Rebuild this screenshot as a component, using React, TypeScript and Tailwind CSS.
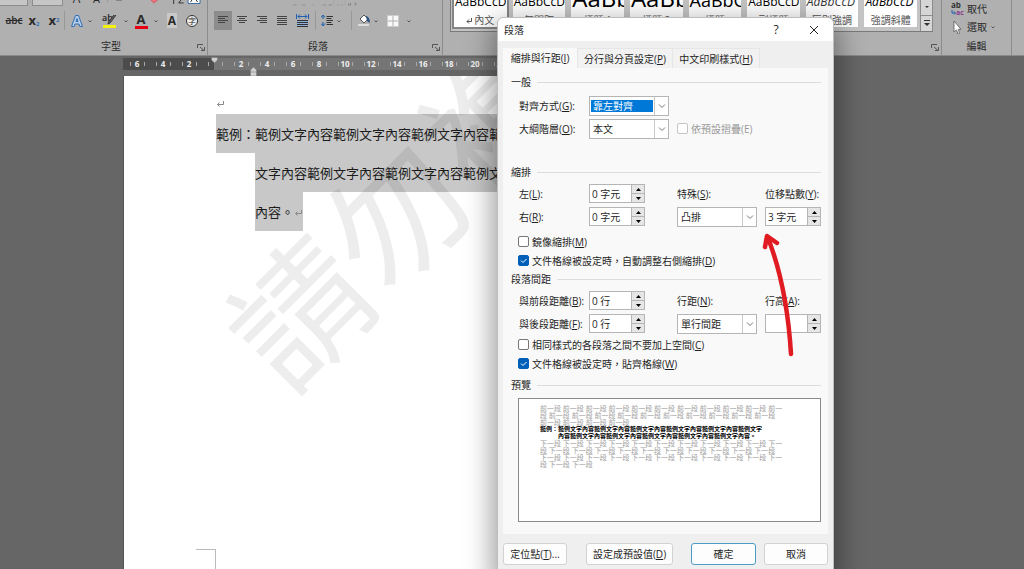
import React from 'react'

const SAMPLE = '範例文字內容'

interface StyleTile {
    name: string
    sample: string
    className: string
}

const styleTiles: StyleTile[] = [
    { name: '內文', sample: 'AaBbCcD', className: 'text-[12px] leading-[14px]' },
    { name: '無間距', sample: 'AaBbCcD', className: 'text-[12px] leading-[14px]' },
    { name: '標題 1', sample: 'AaBb', className: 'text-[24px] leading-[22px]' },
    { name: '標題 2', sample: 'AaBb', className: 'text-[24px] leading-[22px]' },
    { name: '標題', sample: 'AaBbC', className: 'text-[18px] leading-[18px]' },
    { name: '副標題', sample: 'AaBbCcD', className: 'text-[12px] leading-[14px]' },
    { name: '區別強調', sample: 'AaBbCcD', className: 'text-[12px] leading-[14px] italic opacity-80' },
    { name: '強調斜體', sample: 'AaBbCcD', className: 'text-[12px] leading-[14px] italic' },
]

const rulerMarks = [6, 4, 2, 0, 2, 4, 6, 8, 10, 12, 14, 16, 18, 20, 22, 24, 26, 28, 30, 32, 34, 36, 38, 40]

function Chevron({ className = '' }: { className?: string }) {
    return (
        <svg aria-hidden viewBox="0 0 8 8" className={`size-2 shrink-0 ${className}`} fill="none" stroke="#555">
            <path d="M2.500 3.500L4 5l1.500-1.500" />
        </svg>
    )
}

function Separator({ className = '' }: { className?: string }) {
    return <span className={`h-[19px] w-px shrink-0 bg-[#989898] ${className}`} />
}

function Lines({ widths }: { widths: [number, number][] }) {
    return (
        <svg aria-hidden viewBox="0 0 12 12" className="size-3" stroke="#444" strokeWidth="1">
            {widths.map(([from, to], i) => (
                <path key={i} d={`M${from} ${1.5 + i * 2}H${to}`} />
            ))}
        </svg>
    )
}

function Tool({ label, className, children }: { label: string; className: string; children: React.ReactNode }) {
    return (
        <button
            type="button"
            aria-label={label}
            className={`flex h-[19px] shrink-0 items-center justify-center ${className}`}
        >
            {children}
        </button>
    )
}

function Launcher() {
    return (
        <button type="button" aria-label="更多選項" className="absolute right-[2px] bottom-1 size-2">
            <svg aria-hidden viewBox="0 0 8 8" fill="none" stroke="#555">
                <path d="M.5 5V1.500H6M3 4l4 3.500M7.500 4v3.500H4" />
            </svg>
        </button>
    )
}

function FontGroup() {
    return (
        <section className="relative flex w-[208px] shrink-0 flex-col justify-end border-r border-[#8c8c8c]">
            <div className="flex h-5 items-end">
                <span className="h-5 w-7 border-r border-b border-[#8c8c8c] bg-[#c6c6c6]" />
                <span className="ml-1 h-5 w-[31px] border border-[#8c8c8c] bg-[#c6c6c6] pl-1 text-[10px] leading-[14px]">12</span>
                <span className="ml-1 w-5 text-center text-[12px] leading-[14px]">A</span>
                <span className="w-5 text-center text-[11px] leading-[14px]">A</span>
                <Separator className="mb-1" />
                <svg aria-hidden viewBox="0 0 96 20" className="ml-1 h-5 w-[96px]" fill="none">
                    <path d="M4 14h6" stroke="#555" />
                    <path d="M38 13l4 4 5-4" fill="#ef7780" stroke="#d55660" />
                    <path d="M62 11v7M67 12h4l-4 5h5" stroke="#333" />
                    <path d="M76.500 4.500h12v13h-12z" fill="#fff" stroke="#3b6ba5" />
                    <path d="M79 16l3.500-5 3.500 5" stroke="#333" />
                </svg>
            </div>
            <div className="mt-[5px] flex h-[19px] items-center pl-1">
                <Tool label="刪除線" className="w-5 text-[10px] font-semibold line-through">abc</Tool>
                <Tool label="下標" className="w-5 text-[13px] font-bold">
                    <span>x<sub className="text-[6px] text-[#2f6fb5]">2</sub></span>
                </Tool>
                <Tool label="上標" className="w-5 text-[13px] font-bold">
                    <span>x<sup className="text-[6px] text-[#2f6fb5]">2</sup></span>
                </Tool>
                <Separator className="mr-[3px]" />
                <Tool label="文字效果" className="w-[18px]">
                    <svg aria-hidden viewBox="0 0 14 14" className="size-[14px]" strokeLinejoin="round">
                        <path d="M1.500 12.500L5.500 1.500h3l4 11H9.800L9 10H5l-.8 2.500zM6 7.500h2L7 4.500z" fill="#b9cde6" stroke="#2f6fb5" />
                    </svg>
                </Tool>
                <Chevron />
                <Tool label="文字醒目提示色彩" className="ml-1 w-6">
                    <svg aria-hidden viewBox="0 0 16 16" className="size-4">
                        <text x="0" y="8" fontSize="9" fontWeight="600" fill="#222">ab</text>
                        <path d="M14 2L8 10l-2 1 .5-2L12 2" fill="#666" stroke="#333" />
                        <path d="M1 12h13v3H1z" fill="#f6f010" />
                    </svg>
                </Tool>
                <Chevron />
                <Tool label="字型色彩" className="w-[22px]">
                    <span className="w-[13px] border-b-[3px] border-[#e60012] text-center text-[13px] leading-[13px] font-bold">A</span>
                </Tool>
                <Chevron />
                <Tool label="字元網底" className="ml-[2px] w-5">
                    <span className="bg-[#c9c9c9] px-px text-[12px] leading-[15px] font-bold">A</span>
                </Tool>
                <Tool label="圍繞字元" className="w-5">
                    <span className="flex size-3 items-center justify-center rounded-full border border-[#333] bg-[#eee] text-[8px] leading-none">字</span>
                </Tool>
            </div>
            <h2 className="mt-[9px] mb-[2px] pr-[86px] text-right text-[10px] leading-[14px]">字型</h2>
            <Launcher />
        </section>
    )
}

function ParagraphGroup() {
    return (
        <section className="relative flex w-[235px] shrink-0 flex-col justify-end border-r border-[#8c8c8c]">
            <svg aria-hidden viewBox="0 0 234 20" className="h-5 w-[234px]" fill="none" stroke="#444">
                <path d="M9 16.500h2M13 16.500h9M40 16.500h3M44 16.500h8M75 16.500h3" />
                <path d="M109 16.500h12M129 16.500h12" />
                <path d="M146.500 0v18M183.500 0v18" stroke="#989898" />
                <path d="M158 18l3-4M170 14l3 4M194 13h4l-4 4h5M202 10v7l-2-2m2 2l2-2" />
                <path d="M217 9v9M220 9v9" />
            </svg>
            <div className="mt-[5px] flex h-[19px] items-center pl-[6px]">
                <Tool label="靠左對齊" className="w-[18px] bg-[#8c8c8c]">
                    <Lines widths={[[1, 11], [1, 8], [1, 11], [1, 8]]} />
                </Tool>
                <Tool label="置中" className="w-5">
                    <Lines widths={[[1, 11], [3, 9], [1, 11], [3, 9]]} />
                </Tool>
                <Tool label="靠右對齊" className="w-5">
                    <Lines widths={[[1, 11], [4, 11], [1, 11], [4, 11]]} />
                </Tool>
                <Tool label="左右對齊" className="w-5">
                    <Lines widths={[[1, 11], [1, 11], [1, 11], [1, 11], [1, 11]]} />
                </Tool>
                <Tool label="分散對齊" className="w-5">
                    <svg aria-hidden viewBox="0 0 13 13" className="size-[13px]" fill="none" stroke="#333">
                        <path d="M1 6h11v6H1z" fill="#8fb0d8" stroke="none" />
                        <path d="M1 6.500h11M1 8.500h11M1 10.500h11M1 12.500h11" />
                        <path d="M.5 0v5M12.500 0v5M2 2.500h9M4 .5l-2 2 2 2M9 .5l2 2-2 2" stroke="#1f5fae" />
                    </svg>
                </Tool>
                <Separator className="mx-[3px]" />
                <Tool label="行距與段落間距" className="w-4">
                    <svg aria-hidden viewBox="0 0 12 13" className="h-[13px] w-3" fill="none" stroke="#333">
                        <path d="M5.500 2.500h6.500M5.500 4.500h5M5.500 6.500h6.500M5.500 8.500h5M5.500 10.500h6.500" />
                        <path d="M2 1.500v3.500M2 8v3.500M0 3.500l2-2.500 2 2.500M0 9.500l2 2.500 2-2.500" stroke="#1f5fae" />
                    </svg>
                </Tool>
                <Chevron />
                <Separator className="mr-1 ml-2" />
                <Tool label="網底" className="w-4">
                    <svg aria-hidden viewBox="0 0 13 13" className="size-[13px]">
                        <path d="M0 10h11v2H0z" fill="#ddd" />
                        <path d="M2 5l4-4 4 4-4 4z" fill="#fff" stroke="#555" />
                        <path d="M8 2q4 1 4 7L9 7z" fill="#2b4f80" />
                    </svg>
                </Tool>
                <Chevron />
                <Tool label="框線" className="ml-1 w-[18px]">
                    <svg aria-hidden viewBox="0 0 12 12" className="size-3" stroke="#b0b0b0">
                        <path d="M.5.5h11v11H.5z" fill="#f8f8f8" stroke="#ccc" />
                        <path d="M6 1v10M1 6h10" />
                    </svg>
                </Tool>
                <Chevron className="ml-[3px]" />
            </div>
            <h2 className="mt-[9px] mb-[2px] pr-[14px] text-center text-[10px] leading-[14px]">段落</h2>
            <Launcher />
        </section>
    )
}

function StylesGroup() {
    return (
        <section className="relative w-[499px] shrink-0 border-r border-[#8c8c8c] pl-[7px]">
            <div className="flex h-8 w-[483px] items-end border-b border-l border-[#7a7a7a] bg-[#c4c4c4]">
                <ul className="flex h-8 min-w-0 flex-1 gap-[6px] px-[3px]">
                    {styleTiles.map((tile, i) => (
                        <li
                            key={tile.name}
                            className={`mb-1 flex min-w-0 flex-1 flex-col justify-end overflow-hidden bg-white pb-px ${i === 0 ? 'outline-2 outline-[#858585]' : ''}`}
                        >
                            <span className={`pl-px font-["Open_Sans"] whitespace-nowrap text-black ${tile.className}`}>{tile.sample}</span>
                            <span className="mt-[5px] text-center text-[10px] leading-[12px] whitespace-nowrap text-[#555]">
                                {i === 0 && (
                                    <svg aria-hidden viewBox="0 0 6 6" className="mr-[2px] inline size-[6px]" fill="none" stroke="#555">
                                        <path d="M5.500 0v3.500H1M3 1.500l-2 2 2 2" />
                                    </svg>
                                )}
                                {tile.name}
                            </span>
                        </li>
                    ))}
                </ul>
                <div className="flex h-8 w-[13px] shrink-0 flex-col border-x border-[#8c8c8c]">
                    <button type="button" aria-label="向下捲動" className="flex flex-1 items-center justify-center border-b border-[#8c8c8c] bg-[#d6d6d6]">
                        <svg aria-hidden viewBox="0 0 6 4" className="h-1 w-[6px]"><path d="M1 1h4L3 3z" fill="#333" /></svg>
                    </button>
                    <button type="button" aria-label="更多樣式" className="flex flex-1 items-center justify-center bg-[#d6d6d6]">
                        <svg aria-hidden viewBox="0 0 8 7" className="h-[7px] w-2"><path d="M1 0h6v1H1zM1 3h6L4 6z" fill="#333" /></svg>
                    </button>
                </div>
            </div>
            <Launcher />
        </section>
    )
}

function EditingGroup() {
    return (
        <section className="flex w-[70px] shrink-0 flex-col justify-end border-r border-[#8c8c8c] text-[10px]">
            <button type="button" className="flex h-[19px] items-center pl-2">
                <svg aria-hidden viewBox="0 0 16 14" className="mr-px h-[14px] w-4 shrink-0">
                    <text x="1" y="6" fontSize="8" fontWeight="700" fill="#333">ab</text>
                    <text x="6" y="13" fontSize="7" fontWeight="700" fill="#8a3d8f">ac</text>
                    <path d="M2 8v3h3M4 9.500l1.500 1.500L4 12.500" fill="none" stroke="#1f5fae" />
                </svg>
                取代
            </button>
            <button type="button" className="flex h-[19px] items-center pl-2">
                <svg aria-hidden viewBox="0 0 16 14" className="mr-px h-[14px] w-4 shrink-0">
                    <path d="M4 1v11l2.500-2 1.500 4 1.500-.7L8.300 9.300H11z" fill="#fff" stroke="#555" strokeWidth=".8" />
                </svg>
                選取
                <Chevron className="ml-[2px]" />
            </button>
            <h2 className="mt-[3px] mb-[2px] text-center leading-[14px]">編輯</h2>
        </section>
    )
}

function Ruler() {
    return (
        <div className="ml-[123px] flex h-3 max-w-[641px] overflow-hidden bg-[linear-gradient(to_right,#4c4c4c_91px,#757575_91px)] pl-px">
            {rulerMarks.map((mark, i) => (
                <span key={i} className="flex w-[26px] shrink-0 items-center justify-center gap-px text-[8px] leading-3 font-bold text-[#eee]">
                    <i className="h-1 w-px bg-[#a8a8a8]" />
                    <span className="w-[11px] text-center">{mark || ''}</span>
                    <i className="h-1 w-px bg-[#a8a8a8]" />
                </span>
            ))}
        </div>
    )
}

function IndentMarkers() {
    return (
        <div className="absolute top-0 left-[210px]">
            <svg aria-hidden viewBox="0 0 50 22" className="h-[22px] w-[50px]" fill="#d0d0d0" stroke="#777" strokeWidth=".5">
                <path d="M1.500 1.500h6V4l-3 3-3-3z" />
                <path d="M43.500 11l3 3v6h-6v-6zM40.500 16h6" />
            </svg>
        </div>
    )
}

function ReturnMark() {
    return (
        <svg aria-hidden viewBox="0 0 9 8" className="inline h-2 w-[9px]" fill="none" stroke="#888">
            <path d="M7.500 1v3.500H1.500M3.500 2.500l-2 2 2 2" />
        </svg>
    )
}

function DocumentPage() {
    return (
        <main className='relative ml-[123px] flex min-h-0 max-w-[641px] flex-1 flex-col overflow-hidden border-l border-[#555] bg-white pl-[92px] font-["Noto_Sans_CJK_TC",sans-serif] text-[13px] text-[#1c1c1c]'>
            <p className="mt-4 h-[22px] leading-[22px]"><ReturnMark /></p>
            <p className="w-[457px] pl-[39px] -indent-[39px] leading-[39px] break-all">
                <span className="bg-[#c8c8c8] py-[10px]">
                    範例：{SAMPLE.repeat(11)}。<ReturnMark />
                </span>
            </p>
            <div aria-hidden className="absolute top-[19px] left-[43px] w-[544px] -rotate-45 text-[136px] leading-[136px] whitespace-nowrap text-black/7">
                請勿複製
            </div>
            <div className="mt-auto -ml-5 h-5 w-5 border-t border-r border-[#bbb]" />
        </main>
    )
}

function Mnemonic({ text, hotkey, suffix = '' }: { text: string; hotkey: string; suffix?: string }) {
    return (
        <>
            {text}(<span className="underline">{hotkey}</span>){suffix}
        </>
    )
}

function FieldLabel({ id, text, hotkey }: { id: string; text: string; hotkey: string }) {
    return (
        <label htmlFor={id} className="whitespace-nowrap">
            <Mnemonic text={text} hotkey={hotkey} suffix=":" />
        </label>
    )
}

function Dropdown({ id, value, active = false }: { id: string; value: string; active?: boolean }) {
    return (
        <div className="flex h-5 w-20 items-stretch border border-[#b5b5b5] bg-white">
            <select
                id={id}
                defaultValue={value}
                className={`min-w-0 flex-1 appearance-none leading-[12px] outline-none ${active ? 'my-[3px] mr-px ml-px bg-[#0078d7] pl-[2px] text-white' : 'bg-white pl-[3px]'}`}
            >
                <option>{value}</option>
            </select>
            <span className="flex w-[14px] items-center justify-center border-l border-[#c8c8c8]">
                <svg aria-hidden viewBox="0 0 8 8" className="size-2" fill="none" stroke="#777">
                    <path d="M1 2.500l3 3 3-3" />
                </svg>
            </span>
        </div>
    )
}

function Spinner({ id, value }: { id: string; value: string }) {
    return (
        <div className="flex h-[19px] w-14 border border-[#b5b5b5] bg-white">
            <input id={id} defaultValue={value} className="min-w-0 flex-1 pl-[2px] leading-[14px] outline-none" />
            <div className="flex w-[13px] flex-col border-l border-[#b5b5b5] bg-[#e6e6e6]">
                <button type="button" aria-label="增加" className="flex flex-1 items-center justify-center border-b border-[#b5b5b5]">
                    <svg aria-hidden viewBox="0 0 5 3" className="h-[3px] w-[5px]"><path d="M0 3h5L2.500 0z" /></svg>
                </button>
                <button type="button" aria-label="減少" className="flex flex-1 items-center justify-center">
                    <svg aria-hidden viewBox="0 0 5 3" className="h-[3px] w-[5px]"><path d="M0 0h5L2.500 3z" /></svg>
                </button>
            </div>
        </div>
    )
}

interface CheckProps {
    children: React.ReactNode
    checked?: boolean
    disabled?: boolean
}

function Check({ children, checked = false, disabled = false }: CheckProps) {
    return (
        <label className={`flex h-[19px] items-center gap-[3px] whitespace-nowrap ${disabled ? 'text-[#999]' : ''}`}>
            <span className="relative flex">
                <input
                    type="checkbox"
                    defaultChecked={checked}
                    disabled={disabled}
                    className="peer size-[11px] appearance-none rounded-[2px] border border-[#777] bg-white checked:border-[#005fb8] checked:bg-[#005fb8] disabled:border-[#c4c4c4]"
                />
                <svg aria-hidden viewBox="0 0 11 11" className="pointer-events-none absolute inset-0 hidden size-[11px] peer-checked:block" fill="none" stroke="#fff">
                    <path d="M3 5.500l2 2 3.500-3.500" />
                </svg>
            </span>
            <span>{children}</span>
        </label>
    )
}

function SectionHeader({ children, className = '' }: { children: string; className?: string }) {
    return (
        <h3 className={`flex h-4 items-center gap-[6px] ${className}`}>
            {children}
            <span className="h-px flex-1 bg-[#dcdcdc]" />
        </h3>
    )
}

const fieldGrid = 'ml-2 grid grid-cols-[70px_88px_88px_56px] auto-rows-[23px] items-center'

function Preview() {
    return (
        <div className="mt-[5px] ml-[7px] h-[124px] border border-[#8a8a8a] bg-white pt-[6px] pl-[21px] text-[7px] leading-[7px] text-[#a0a0a0]">
            <p className="w-[243px] break-all">{Array(25).fill('前一段').join(' ')}</p>
            <div className="text-[6px] font-bold text-black">
                <p>範例：{SAMPLE.repeat(5)}範例文字</p>
                <p className="pl-[18px]">內容{SAMPLE.repeat(5)}。</p>
            </div>
            <p className="w-[243px] break-all">{Array(34).fill('下一段').join(' ')}</p>
        </div>
    )
}

function DialogButton({ children, className }: { children: React.ReactNode; className: string }) {
    return (
        <button type="button" className={`h-[22px] rounded-[3px] border bg-[#fdfdfd] whitespace-nowrap ${className}`}>
            {children}
        </button>
    )
}

function ParagraphDialog() {
    return (
        <div
            role="dialog"
            aria-label="段落"
            className="absolute top-[17px] left-[497px] w-[337px] rounded-t-[6px] border border-[#bdbdbd] bg-[#efefef] text-[10px] leading-[14px] text-[#1f1f1f] shadow-[0_10px_28px_4px_rgba(0,0,0,0.4)]"
        >
            <header className="flex h-[23px] items-center rounded-t-[6px] bg-white pl-[6px]">
                <h1 className="flex-1">段落</h1>
                <button type="button" aria-label="說明" className="w-[38px] text-[12px]">?</button>
                <button type="button" aria-label="關閉" className="flex w-[38px] justify-center">
                    <svg aria-hidden viewBox="0 0 10 10" className="size-[10px]" fill="none" stroke="#222">
                        <path d="M1 1l8 8M9 1L1 9" />
                    </svg>
                </button>
            </header>

            <div role="tablist" className="mt-[7px] ml-[5px] flex h-5">
                <button type="button" role="tab" aria-selected className="w-[74px] bg-[#f9f9f9]">
                    <Mnemonic text="縮排與行距" hotkey="I" />
                </button>
                <button type="button" role="tab" className="w-[96px] border border-b-0 border-[#e6e6e6] bg-[#f2f2f2]">
                    <Mnemonic text="分行與分頁設定" hotkey="P" />
                </button>
                <button type="button" role="tab" className="w-[87px] border border-b-0 border-l-0 border-[#e6e6e6] bg-[#f2f2f2]">
                    <Mnemonic text="中文印刷樣式" hotkey="H" />
                </button>
            </div>

            <div className="mx-[5px] bg-[#f9f9f9] pt-[6px] pr-[7px] pb-3 pl-2">
                <SectionHeader>一般</SectionHeader>
                <div className={`${fieldGrid} mt-1`}>
                    <FieldLabel id="align" text="對齊方式" hotkey="G" />
                    <Dropdown id="align" value="靠左對齊" active />
                    <span className="col-span-2" />
                    <FieldLabel id="outline" text="大綱階層" hotkey="O" />
                    <Dropdown id="outline" value="本文" />
                    <div className="col-span-2">
                        <Check disabled>依預設摺疊(E)</Check>
                    </div>
                </div>

                <SectionHeader className="mt-6">縮排</SectionHeader>
                <div className={`${fieldGrid} mt-[2px]`}>
                    <FieldLabel id="left" text="左" hotkey="L" />
                    <Spinner id="left" value="0 字元" />
                    <FieldLabel id="special" text="特殊" hotkey="S" />
                    <FieldLabel id="by" text="位移點數" hotkey="Y" />
                    <FieldLabel id="right" text="右" hotkey="R" />
                    <Spinner id="right" value="0 字元" />
                    <Dropdown id="special" value="凸排" />
                    <Spinner id="by" value="3 字元" />
                </div>
                <div className="mt-1 mb-px ml-[7px]">
                    <Check><Mnemonic text="鏡像縮排" hotkey="M" /></Check>
                    <Check checked><Mnemonic text="文件格線被設定時，自動調整右側縮排" hotkey="D" /></Check>
                </div>

                <SectionHeader>段落間距</SectionHeader>
                <div className={`${fieldGrid} mt-[2px]`}>
                    <FieldLabel id="before" text="與前段距離" hotkey="B" />
                    <Spinner id="before" value="0 行" />
                    <FieldLabel id="spacing" text="行距" hotkey="N" />
                    <FieldLabel id="at" text="行高" hotkey="A" />
                    <FieldLabel id="after" text="與後段距離" hotkey="F" />
                    <Spinner id="after" value="0 行" />
                    <Dropdown id="spacing" value="單行間距" />
                    <Spinner id="at" value="" />
                </div>
                <div className="ml-[7px]">
                    <Check><Mnemonic text="相同樣式的各段落之間不要加上空間" hotkey="C" /></Check>
                    <Check checked><Mnemonic text="文件格線被設定時，貼齊格線" hotkey="W" /></Check>
                </div>

                <SectionHeader className="mt-1">預覽</SectionHeader>
                <Preview />
            </div>

            <footer className="mx-[5px] flex pt-[9px] pb-[10px]">
                <DialogButton className="w-16 border-[#d2d2d2]"><Mnemonic text="定位點" hotkey="T" suffix="..." /></DialogButton>
                <DialogButton className="ml-[19px] w-[87px] border-[#d2d2d2]"><Mnemonic text="設定成預設值" hotkey="D" /></DialogButton>
                <DialogButton className="ml-[18px] w-[65px] border-[#4a9cc4]">確定</DialogButton>
                <DialogButton className="ml-2 w-[64px] border-[#d2d2d2]">取消</DialogButton>
            </footer>

            {/* hand-drawn pointer towards the indent amount */}
            <svg aria-hidden viewBox="0 0 36 128" className="pointer-events-none absolute top-[213px] left-[262px] h-32 w-9" fill="none" stroke="#e01b22" strokeWidth="4.500" strokeLinecap="round" strokeLinejoin="round">
                <path d="M31 123C29 90 24 48 8 7M5 16L7 5l10 7" />
            </svg>
        </div>
    )
}

export default function App() {
    return (
        <div className='relative flex h-screen flex-col overflow-hidden bg-[#666] font-["Open_Sans","Noto_Sans_CJK_TC",sans-serif] text-[#2a2a2a]'>
            <div className="flex h-14 shrink-0 overflow-hidden border-b border-[#8a8a8a] bg-[#b0b0b0]">
                <FontGroup />
                <ParagraphGroup />
                <StylesGroup />
                <EditingGroup />
            </div>
            <div className="relative shrink-0 pt-[2px] pb-[6px]">
                <Ruler />
                <IndentMarkers />
            </div>
            <DocumentPage />
            <ParagraphDialog />
        </div>
    )
}
